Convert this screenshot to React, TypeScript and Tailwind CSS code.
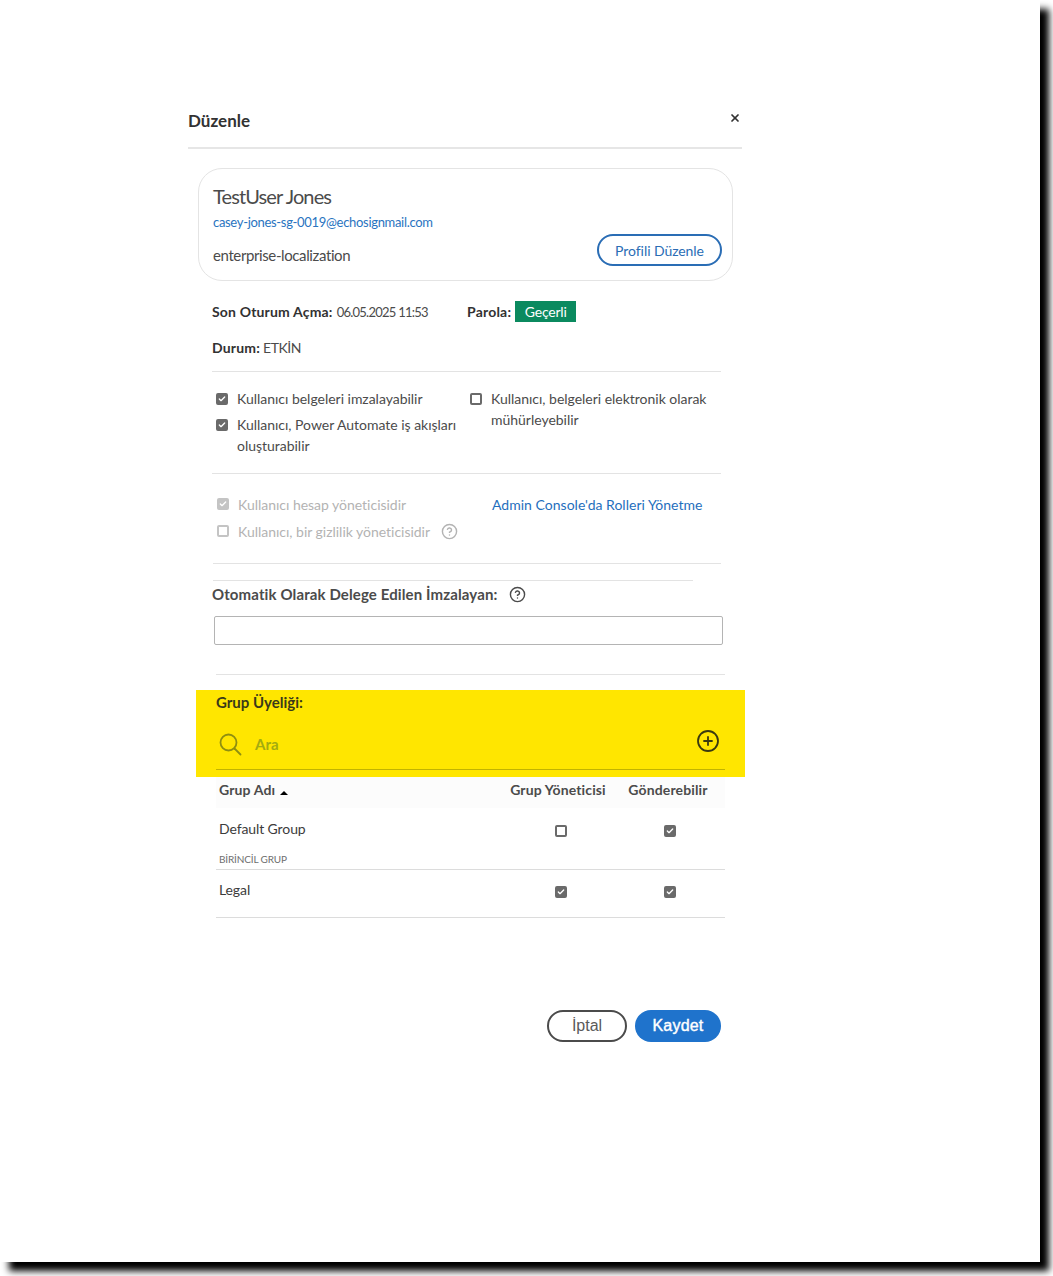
import React from 'react';
import { CirclePlus, CircleHelp, Check, X } from 'lucide-react';

const CheckBox: React.FC<{ on?: boolean; off?: boolean }> = ({ on, off }) => (
  <span
    className={`flex h-3 w-3 shrink-0 items-center justify-center rounded-[2px] border-2 ${
      off ? 'border-[#c4c4c4]' : 'border-[#6a6a6a]'
    } ${on ? (off ? 'bg-[#c4c4c4]' : 'bg-[#6a6a6a]') : 'bg-white'}`}
  >
    {on && <Check size={10} strokeWidth={4} className="text-white" />}
  </span>
);

const Option: React.FC<{ on?: boolean; off?: boolean; children: React.ReactNode }> = ({ on, off, children }) => (
  <div className={`flex gap-[9px] leading-[21px] tracking-[-0.02px] ${off ? 'text-[#b3b3b3]' : 'text-[#4b4b4b]'}`}>
    <span className={off ? 'mt-[4px]' : 'mt-[5px]'}><CheckBox on={on} off={off} /></span>
    <span>{children}</span>
  </div>
);

const Rule: React.FC<{ className?: string }> = ({ className }) => (
  <div className={`h-px bg-[#e3e3e3] ${className ?? ''}`} />
);

const GroupRow: React.FC<{ name: string; sub?: string; admin?: boolean; send?: boolean; height: string; top: string; boxTop: string }> = ({ name, sub, admin, send, height, top, boxTop }) => (
  <div className={`flex border-b border-[#dcdcdc] ${height}`}>
    <div className={`flex-1 pl-[3px] ${top}`}>
      <div className="text-[14px] leading-[20px] text-[#3c3c3c] tracking-[-0.1px]">{name}</div>
      {sub && <div className="mt-[13px] text-[10px] leading-[14px] text-[#6e6e6e] tracking-[-0.15px]">{sub}</div>}
    </div>
    <div className={`flex w-[110px] justify-center pr-[2px] ${boxTop}`}><CheckBox on={admin} /></div>
    <div className={`flex w-[108px] justify-center pr-[2px] ${boxTop}`}><CheckBox on={send} /></div>
  </div>
);

export default function App() {
  return (
    <div className="h-[1276px] w-[1053px] overflow-hidden bg-white">
      <div className="h-[1262px] w-[1040px] bg-white pl-[188px] pt-[104px] font-['Lato',sans-serif] shadow-[9px_9px_7px_#000]">
        <div className="w-[554px] text-[14px] tracking-[-0.2px]">
          {/* Header */}
          <div className="flex h-[45px] justify-between border-b-2 border-[#e6e6e6]">
            <h1 className="pt-[6px] text-[17px] font-bold leading-[22px] tracking-normal text-[#323232]">Düzenle</h1>
            <X size={12} strokeWidth={3.5} className="mr-[1px] mt-[8px] text-[#323232]" />
          </div>

          {/* Profile card */}
          <div className="ml-[10px] mt-[19px] h-[113px] w-[535px] rounded-[24px] border border-[#e4e4e4] pl-[14px] pr-[10px] pt-[15px]">
            <div className="text-[20px] leading-[24px] tracking-[-0.87px] text-[#4b4b4b]">TestUser Jones</div>
            <div className="mt-[4px] text-[13px] leading-[20px] tracking-[-0.31px] text-[#2a74bf]">casey-jones-sg-0019@echosignmail.com</div>
            <div className="mt-[2px] flex items-center justify-between">
              <span className="mt-[10px] text-[15px] tracking-[-0.39px] text-[#4b4b4b]">enterprise-localization</span>
              <button className="h-[32px] w-[125px] rounded-full border-2 border-[#2a6db5] text-[14px] tracking-[-0.07px] text-[#2a6db5]">Profili Düzenle</button>
            </div>
          </div>

          {/* Status */}
          <div className="ml-[24px] w-[509px] text-[#4b4b4b]">
            <div className="mt-[20px] flex h-[21px] items-center">
              <span className="w-[255px]">
                <b className="tracking-[0.17px] text-[#323232]">Son Oturum Açma:</b>
                <span className="ml-[4px] text-[13px] tracking-[-0.75px]">06.05.2025 11:53</span>
              </span>
              <b className="tracking-[0.2px] text-[#323232]">Parola:</b>
              <span className="ml-[4px] flex h-[21px] w-[61px] items-center justify-center bg-[#0b8a5f] text-white">Geçerli</span>
            </div>
            <div className="mt-[16px] leading-[20px]">
              <b className="tracking-[0.2px] text-[#323232]">Durum:</b>
              <span className="ml-[3px] tracking-[-0.5px]">ETKİN</span>
            </div>
            <Rule className="mt-[13px]" />

            {/* Permissions */}
            <div className="mt-[16px] flex pl-[4px]">
              <div className="flex w-[254px] flex-col gap-[5px] pr-[8px]">
                <Option on>Kullanıcı belgeleri imzalayabilir</Option>
                <Option on>Kullanıcı, Power Automate iş akışları oluşturabilir</Option>
              </div>
              <div className="w-[247px]">
                <Option>Kullanıcı, belgeleri elektronik olarak mühürleyebilir</Option>
              </div>
            </div>
            <Rule className="mt-[17px]" />

            {/* Roles */}
            <div className="mt-[20px] flex pl-[5px]">
              <div className="flex w-[275px] flex-col gap-[6px]">
                <Option on off>Kullanıcı hesap yöneticisidir</Option>
                <div className="flex items-center gap-[11px]">
                  <Option off>Kullanıcı, bir gizlilik yöneticisidir</Option>
                  <CircleHelp size={17} className="text-[#b3b3b3]" />
                </div>
              </div>
              <span className="leading-[21px] tracking-[0.02px] text-[#1f6fbd]">Admin Console'da Rolleri Yönetme</span>
            </div>
            <Rule className="ml-[1px] mt-[21px]" />
            <Rule className="ml-[1px] mt-[16px] w-[480px]" />

            {/* Delegate */}
            <div className="mt-[3px] flex h-[20px] items-center gap-[11px]">
              <b className="text-[15px] tracking-[0.12px] text-[#4b4b4b]">Otomatik Olarak Delege Edilen İmzalayan:</b>
              <CircleHelp size={17} className="text-[#4b4b4b]" />
            </div>
            <div className="ml-[2px] mt-[12px] h-[29px] w-[509px] rounded-[2px] border border-[#b4b4b4]" />
          </div>
          <Rule className="ml-[28px] mt-[29px] w-[509px]" />

          {/* Highlighted search */}
          <div className="ml-[8px] mt-[15px] h-[87px] w-[549px] bg-[#ffe600] pl-[20px] pr-[20px] pt-[2px]">
            <b className="block text-[15px] leading-[20px] tracking-normal text-[#3a3a1a]">Grup Üyeliği:</b>
            <div className="mt-[19px] flex h-[28px] items-center justify-between pl-[3px] pr-[5px]">
              <div className="flex items-center gap-[13px]">
                <svg width="23" height="23" viewBox="0 0 23 23" fill="none" stroke="#8f8f10" strokeWidth="1.8" className="mt-[-1px]">
                  <circle cx="9.5" cy="9.5" r="8" />
                  <path d="M15.5 15.5 L21.5 21.5" strokeLinecap="round" />
                </svg>
                <b className="mt-[-1px] text-[15px] tracking-normal text-[#a3ab10]">Ara</b>
              </div>
              <CirclePlus size={24} strokeWidth={1.8} className="-mt-[8px] text-[#3a3a10]" />
            </div>
            <div className="mt-[10px] h-px w-[509px] bg-[#c2b300]" />
          </div>

          {/* Groups table */}
          <div className="ml-[28px] w-[509px]">
            <div className="flex h-[31px] bg-[#fcfcfc] pt-[3px] font-bold leading-[20px] tracking-[0.13px] text-[#4b4b4b]">
              <div className="flex h-[20px] flex-1 items-center gap-[5px] pl-[3px]">
                Grup Adı
                <span className="mt-[5px] h-0 w-0 border-x-[4px] border-b-[4px] border-x-transparent border-b-black" />
              </div>
              <div className="w-[110px] pr-[8px] text-center">Grup Yöneticisi</div>
              <div className="w-[108px] pr-[6px] text-center">Gönderebilir</div>
            </div>
            <GroupRow name="Default Group" sub="BİRİNCİL GRUP" send height="h-[62px]" top="pt-[11px]" boxTop="pt-[17px]" />
            <GroupRow name="Legal" admin send height="h-[48px]" top="pt-[10px]" boxTop="pt-[16px]" />
          </div>

          {/* Footer */}
          <div className="mt-[92px] flex justify-end gap-[8px] pr-[21px] font-['Liberation_Sans',sans-serif] text-[16px] tracking-normal">
            <button className="h-[32px] w-[80px] rounded-full border-2 border-[#4b4b4b] text-[#5a5a5a]">İptal</button>
            <button className="h-[32px] w-[86px] rounded-full bg-[#1f73cc] tracking-[0.2px] text-white [-webkit-text-stroke:0.4px_white]">Kaydet</button>
          </div>
        </div>
      </div>
    </div>
  );
}
